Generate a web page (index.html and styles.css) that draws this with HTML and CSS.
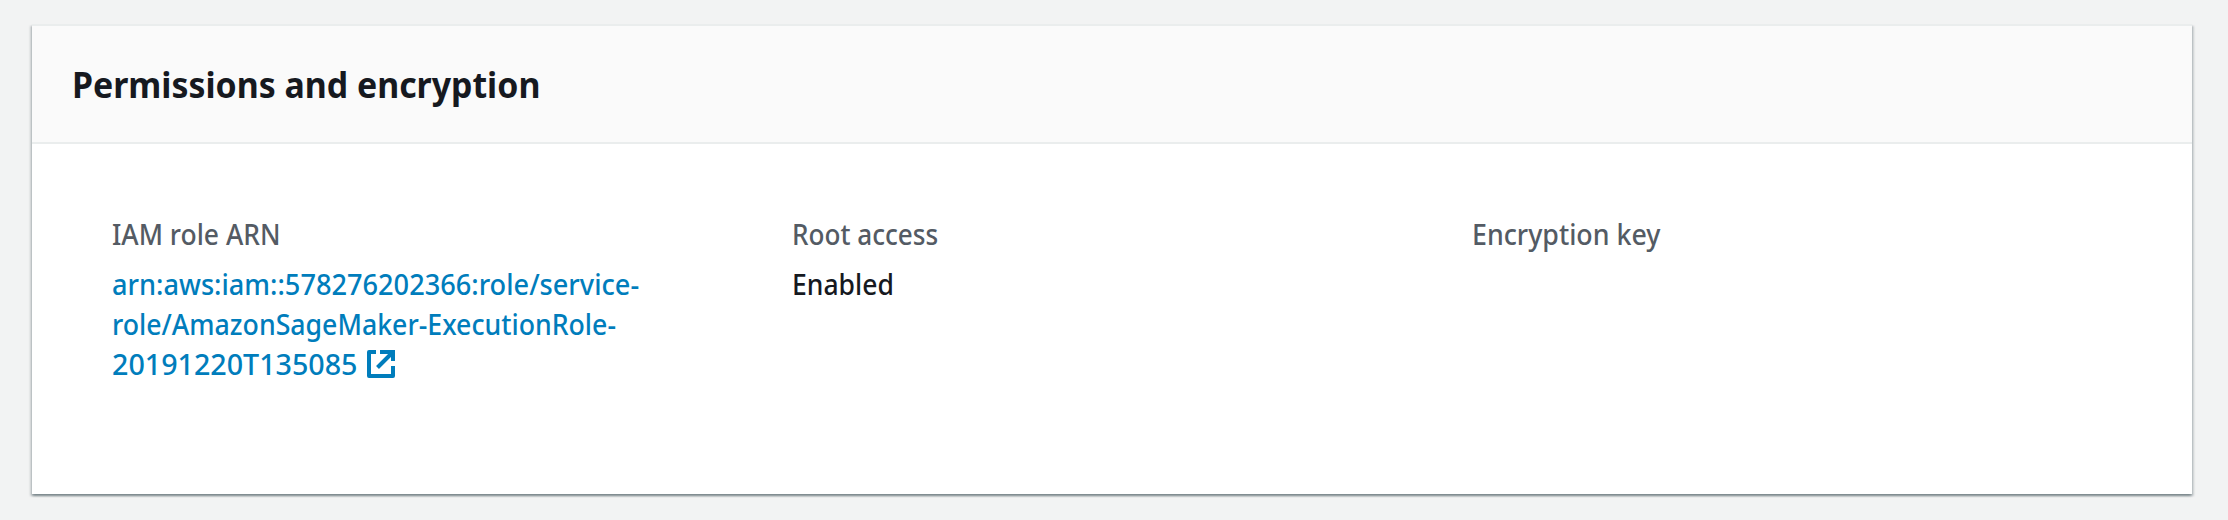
FILE: index.html
```html
<!DOCTYPE html>
<html lang="en">
<head>
<meta charset="utf-8">
<title>Permissions and encryption</title>
<link rel="stylesheet" href="styles.css">
</head>
<body>
<section class="card">
  <header class="card-header"><h2 class="card-title">Permissions and encryption</h2></header>
  <div class="card-body">
    <div class="field">
      <div class="label label-role">IAM role ARN</div>
      <a class="value link"><span class="line line-1">arn:aws:iam::578276202366:role/service-</span><span class="line line-2">role/AmazonSageMaker-ExecutionRole-</span><span class="last-line"><span class="line line-3">20191220T135085</span><svg class="external" viewBox="0 0 28 28" aria-hidden="true"><path d="M9 2H2v24h24V16"/><path d="M13 2h13v9" stroke-linejoin="miter"/><path d="M25 3L10.5 17.5"/></svg></span></a>
    </div>
    <div class="field">
      <div class="label label-root">Root access</div>
      <div class="value"><span class="line line-enabled">Enabled</span></div>
    </div>
    <div class="field">
      <div class="label label-key">Encryption key</div>
    </div>
  </div>
</section>
</body>
</html>
```
FILE: styles.css
```css
* { box-sizing: border-box; }
body {
  margin: 0;
  padding: 24px 36px 0 32px;
  height: 520px;
  background: #f2f3f3;
  font-family: "Noto Sans", "Open Sans", sans-serif;
  color: #16191f;
}
.card {
  height: 470px;
  background: #fff;
  border-top: 2px solid #eaeded;
  box-shadow: 0 2px 2px 0 rgba(0, 28, 36, .3), 2px 2px 2px 0 rgba(0, 28, 36, .15), -2px 2px 2px 0 rgba(0, 28, 36, .15);
}
.card-header {
  height: 118px;
  padding: 37px 40px 0;
  background: #fafafa;
  border-bottom: 2px solid #eaeded;
}
.card-title {
  width: max-content;
  margin: 0;
  font-size: 36px;
  line-height: 44px;
  font-weight: 700;
  transform: scaleX(.94);
  transform-origin: left;
}
.card-body {
  display: grid;
  grid-template-columns: repeat(3, 680px);
  padding: 70px 80px 0;
}
.field { font-size: 28px; line-height: 40px; font-weight: 500; }
.label { width: max-content; color: #545b64; transform-origin: left; }
.value { display: block; margin-top: 10px; }
.link { color: #007dbc; }
.line { display: block; width: max-content; transform-origin: left; }
.label-role { transform: scaleX(.945); }
.label-root { transform: scaleX(.933); }
.label-key { transform: scaleX(.956); }
.line-1 { transform: scaleX(.97); }
.line-2 { transform: scaleX(.953); }
.line-3 { transform: scaleX(1.023); }
.line-enabled { transform: scaleX(.947); }
.last-line { display: flex; }
.external {
  width: 28px;
  height: 28px;
  margin: 6px 0 0 15px;
  fill: none;
  stroke: currentColor;
  stroke-width: 4;
  stroke-linejoin: round;
}
```
